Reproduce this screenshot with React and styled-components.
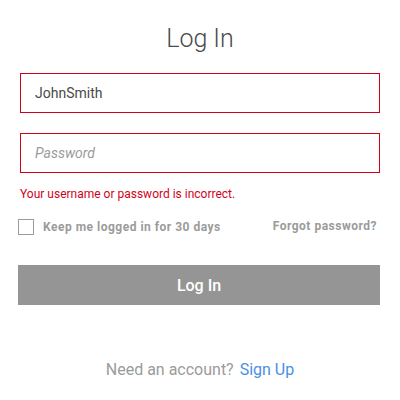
import React from "react";
import styled, { createGlobalStyle } from "styled-components";

const Global = createGlobalStyle`
  html, body { margin: 0; padding: 0; background: #fff; }
  body { font-family: Roboto, "Liberation Sans", sans-serif; }
  * { box-sizing: border-box; }
`;

const Page = styled.div`
  width: 400px;
  height: 400px;
  padding: 0 20px;
  display: flex;
  flex-direction: column;
`;

const Title = styled.h1`
  margin: 24px 0 0;
  height: 30px;
  line-height: 30px;
  text-align: center;
  font-size: 25px;
  font-weight: 300;
  color: #4a4a4a;
`;

const Field = styled.input`
  display: block;
  width: 360px;
  height: 40px;
  margin-top: ${(p) => p.$top}px;
  padding: 0 14px;
  border: 1px solid #d0021b;
  border-radius: 0;
  outline: none;
  font-family: inherit;
  font-size: 14px;
  color: #4a4a4a;
  background: #fff;
  &::placeholder {
    color: #9b9b9b;
    font-style: italic;
  }
`;

const Error = styled.div`
  margin-top: 13px;
  font-size: 12px;
  line-height: 16px;
  color: #d0021b;
`;

const OptionsRow = styled.div`
  margin: 17px 3px 0 -2px;
  display: flex;
  align-items: center;
  justify-content: space-between;
`;

const CheckLabel = styled.label`
  display: flex;
  align-items: center;
  gap: 9px;
  font-size: 12px;
  font-weight: 700;
  letter-spacing: 0.5px;
  color: #9b9b9b;
`;

const Box = styled.span`
  width: 16px;
  height: 16px;
  border: 1px solid #9b9b9b;
  background: #fff;
`;

const Forgot = styled.a`
  font-size: 12px;
  font-weight: 700;
  letter-spacing: 0.5px;
  color: #9b9b9b;
  text-decoration: none;
  margin-top: -3px;
`;

const Button = styled.button`
  margin: 30px 0 0 -2px;
  width: 362px;
  height: 40px;
  border: none;
  background: #959595;
  color: #fff;
  font-family: inherit;
  font-size: 16px;
  font-weight: 500;
`;

const Footer = styled.div`
  margin-top: 55px;
  display: flex;
  justify-content: center;
  gap: 6px;
  font-size: 16px;
  color: #9b9b9b;
`;

const Link = styled.a`
  color: #4a90e2;
  text-decoration: none;
`;

export default function App() {
  return (
    <Page>
      <Global />
      <Title>Log In</Title>
      <Field $top={19} defaultValue="JohnSmith" />
      <Field $top={20} placeholder="Password" />
      <Error>Your username or password is incorrect.</Error>
      <OptionsRow>
        <CheckLabel>
          <Box />
          Keep me logged in for 30 days
        </CheckLabel>
        <Forgot>Forgot password?</Forgot>
      </OptionsRow>
      <Button>Log In</Button>
      <Footer>
        <span>Need an account?</span>
        <Link>Sign Up</Link>
      </Footer>
    </Page>
  );
}
